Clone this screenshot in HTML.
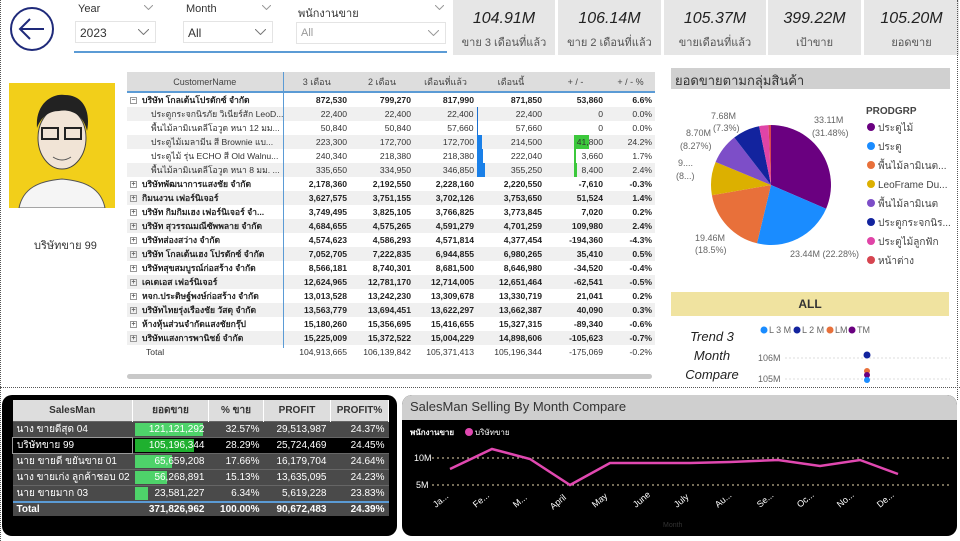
<!DOCTYPE html>
<html><head><meta charset="utf-8"><style>
*{box-sizing:border-box;margin:0;padding:0}
body{width:960px;height:541px;background:#fff;position:relative;overflow:hidden;font-family:"Liberation Sans","DejaVu Sans",sans-serif;color:#333}
.a{position:absolute}
.lbl{font-size:11px;color:#333}
.box{border:1px solid #e4e4e4;background:#fff;font-size:12px;color:#333;padding:4px 4px}
.chev{position:absolute;right:6px;top:7px;width:11px;height:6px}
.card{position:absolute;top:0;height:55px;background:#e6e6e6;text-align:center}
.card .v{font-size:16px;font-style:italic;color:#222;margin-top:10px}
.card .l{font-size:11px;color:#555;margin-top:5px}
table.m{position:absolute;left:127px;top:72px;width:528px;border-collapse:collapse;font-size:8.6px;table-layout:fixed}
table.m td{height:13.4px;padding:0 3px;text-align:right;white-space:nowrap;overflow:hidden;color:#333}
table.m td:first-child{text-align:left}
table.m th{height:20px;background:#ddd;font-weight:normal;font-size:9px;color:#444;border-bottom:2px solid #5b9bd5}
table.m tr.b td{font-weight:bold;color:#222}
table.m tr:nth-child(odd) td{background:#f0f0f0}
.pm{display:inline-block;width:7px;height:7px;border:1px solid #999;font-size:7px;line-height:5px;text-align:center;margin-right:5px;color:#666;vertical-align:middle}
table.s{position:absolute;left:12px;top:400px;width:376px;border-collapse:collapse;font-size:10px;table-layout:fixed}
table.s th{background:#ddd;color:#333;height:21px;font-size:10px;border-right:1px solid #fff}
table.s td{height:14.6px;color:#fff;background:#4a4a4a;text-align:right;padding:0 4px;border-top:1px solid #666;white-space:nowrap;position:relative}
table.s td:first-child{text-align:left}
.bar{position:absolute;left:2px;top:1px;bottom:1px;background:#4ed36a}
.bar+span{position:relative}
</style></head><body>
<svg class="a" style="left:9px;top:6px" width="46" height="46" viewBox="0 0 46 46"><circle cx="23" cy="23" r="21" fill="none" stroke="#1f2a7a" stroke-width="2"/><path d="M35 23H12M21 13L11 23L21 33" fill="none" stroke="#1f2a7a" stroke-width="2"/></svg>
<div class="a lbl" style="left:78px;top:3px">Year</div><svg class="a" style="left:144px;top:5px" width="9" height="5"><polyline points="0,0 4.5,4.5 9,0" fill="none" stroke="#999"/></svg>
<div class="a box" style="left:75px;top:21px;width:81px;height:22px">2023<svg class="chev"><polyline points="0,0 5.5,5.5 11,0" fill="none" stroke="#777"/></svg></div>
<div class="a lbl" style="left:186px;top:3px">Month</div><svg class="a" style="left:262px;top:5px" width="9" height="5"><polyline points="0,0 4.5,4.5 9,0" fill="none" stroke="#999"/></svg>
<div class="a box" style="left:183px;top:21px;width:90px;height:22px">All<svg class="chev"><polyline points="0,0 5.5,5.5 11,0" fill="none" stroke="#777"/></svg></div>
<div class="a lbl" style="left:298px;top:4px">พนักงานขาย</div><svg class="a" style="left:435px;top:5px" width="9" height="5"><polyline points="0,0 4.5,4.5 9,0" fill="none" stroke="#999"/></svg>
<div class="a box" style="left:296px;top:22px;width:150px;height:22px;color:#999;font-size:11px">All<svg class="chev"><polyline points="0,0 5.5,5.5 11,0" fill="none" stroke="#999"/></svg></div>
<div class="a" style="left:74px;top:51px;width:373px;height:2px;background:#5b9bd5"></div>
<div class="card" style="left:453px;width:102px"><div class="v">104.91M</div><div class="l">ขาย 3 เดือนที่แล้ว</div></div>
<div class="card" style="left:558px;width:103px"><div class="v">106.14M</div><div class="l">ขาย 2 เดือนที่แล้ว</div></div>
<div class="card" style="left:664px;width:102px"><div class="v">105.37M</div><div class="l">ขายเดือนที่แล้ว</div></div>
<div class="card" style="left:768px;width:93px"><div class="v">399.22M</div><div class="l">เป้าขาย</div></div>
<div class="card" style="left:864px;width:95px"><div class="v">105.20M</div><div class="l">ยอดขาย</div></div>
<div class="a" style="left:0;top:0;width:2px;height:541px;border-left:1px dotted #555"></div>
<div class="a" style="left:957px;top:0;width:2px;height:400px;border-left:1px dotted #555"></div>
<div class="a" style="left:0;top:387px;width:960px;border-top:1px dotted #555"></div>
<div class="a" style="left:9px;top:83px;width:106px;height:125px;background:#f2cf1a"></div>
<svg class="a" style="left:9px;top:83px" width="106" height="125" viewBox="0 0 106 125"><path d="M10 125C14 105 30 98 53 96C76 98 92 105 96 125Z" fill="#f5f5f5" stroke="#555"/><ellipse cx="53" cy="55" rx="24" ry="31" fill="#f1e4d6" stroke="#444"/><path d="M28 45C26 20 44 10 56 12C74 12 82 28 78 48C74 30 60 26 50 28C40 28 32 34 28 45Z" fill="#222"/><rect x="33" y="45" width="16" height="11" fill="none" stroke="#222" stroke-width="2"/><rect x="56" y="45" width="16" height="11" fill="none" stroke="#222" stroke-width="2"/><path d="M44 74Q53 80 62 74" stroke="#555" fill="none"/></svg>
<div class="a" style="left:34px;top:236px;font-size:11px;color:#333">บริษัทขาย 99</div>
<table class="m"><colgroup><col style="width:156px"><col style="width:67px"><col style="width:64px"><col style="width:63px"><col style="width:68px"><col style="width:61px"><col style="width:49px"></colgroup>
<tr><th>CustomerName</th><th style="border-left:1px solid #5b9bd5">3 เดือน</th><th>2 เดือน</th><th>เดือนที่แล้ว</th><th>เดือนนี้</th><th>+ / -</th><th>+ / - %</th></tr>
<tr class="b"><td><span class="pm">−</span>บริษัท โกลเด้นโปรดักซ์ จำกัด</td><td>872,530</td><td>799,270</td><td>817,990</td><td>871,850</td><td>53,860</td><td>6.6%</td></tr>
<tr><td style="padding-left:24px">ประตูกระจกนิรภัย วิเนียร์สัก LeoD...</td><td>22,400</td><td>22,400</td><td>22,400</td><td style="border-left:1px solid #1a6fd0">22,400</td><td>0</td><td>0.0%</td></tr>
<tr><td style="padding-left:24px">พื้นไม้ลามิเนตลีโอวูด หนา 12 มม...</td><td>50,840</td><td>50,840</td><td>57,660</td><td style="border-left:1px solid #1a6fd0">57,660</td><td>0</td><td>0.0%</td></tr>
<tr><td style="padding-left:24px">ประตูไม้เมลามีน สี Brownie แบ...</td><td>223,300</td><td>172,700</td><td>172,700</td><td style="background:linear-gradient(90deg,#1a80e8 5px,#f0f0f0 5px)">214,500</td><td style="background:linear-gradient(90deg,#f0f0f0 29px,#3cc83c 29px,#3cc83c 44px,#f0f0f0 44px)">41,800</td><td>24.2%</td></tr>
<tr><td style="padding-left:24px">ประตูไม้ รุ่น ECHO สี Old Walnu...</td><td>240,340</td><td>218,380</td><td>218,380</td><td style="background:linear-gradient(90deg,#1a80e8 6px,#fff 6px)">222,040</td><td style="background:linear-gradient(90deg,#fff 29px,#3cc83c 29px,#3cc83c 31px,#fff 31px)">3,660</td><td>1.7%</td></tr>
<tr><td style="padding-left:24px">พื้นไม้ลามิเนตลีโอวูด หนา 8 มม. ...</td><td>335,650</td><td>334,950</td><td>346,850</td><td style="background:linear-gradient(90deg,#1a80e8 8px,#f0f0f0 8px)">355,250</td><td style="background:linear-gradient(90deg,#f0f0f0 29px,#3cc83c 29px,#3cc83c 32px,#f0f0f0 32px)">8,400</td><td>2.4%</td></tr>
<tr class="b"><td><span class="pm">+</span>บริษัทพัฒนาการแสงชัย จำกัด</td><td>2,178,360</td><td>2,192,550</td><td>2,228,160</td><td>2,220,550</td><td>-7,610</td><td>-0.3%</td></tr>
<tr class="b"><td><span class="pm">+</span>กิมนงวน เฟอร์นิเจอร์</td><td>3,627,575</td><td>3,751,155</td><td>3,702,126</td><td>3,753,650</td><td>51,524</td><td>1.4%</td></tr>
<tr class="b"><td><span class="pm">+</span>บริษัท กิมกิมเฮง เฟอร์นิเจอร์ จำ...</td><td>3,749,495</td><td>3,825,105</td><td>3,766,825</td><td>3,773,845</td><td>7,020</td><td>0.2%</td></tr>
<tr class="b"><td><span class="pm">+</span>บริษัท สุวรรณมณีซัพพลาย จำกัด</td><td>4,684,655</td><td>4,575,265</td><td>4,591,279</td><td>4,701,259</td><td>109,980</td><td>2.4%</td></tr>
<tr class="b"><td><span class="pm">+</span>บริษัทส่องสว่าง จำกัด</td><td>4,574,623</td><td>4,586,293</td><td>4,571,814</td><td>4,377,454</td><td>-194,360</td><td>-4.3%</td></tr>
<tr class="b"><td><span class="pm">+</span>บริษัท โกลเด้นเฮง โปรดักซ์ จำกัด</td><td>7,052,705</td><td>7,222,835</td><td>6,944,855</td><td>6,980,265</td><td>35,410</td><td>0.5%</td></tr>
<tr class="b"><td><span class="pm">+</span>บริษัทสุขสมบูรณ์ก่อสร้าง จำกัด</td><td>8,566,181</td><td>8,740,301</td><td>8,681,500</td><td>8,646,980</td><td>-34,520</td><td>-0.4%</td></tr>
<tr class="b"><td><span class="pm">+</span>เคเดเอส เฟอร์นิเจอร์</td><td>12,624,965</td><td>12,781,170</td><td>12,714,005</td><td>12,651,464</td><td>-62,541</td><td>-0.5%</td></tr>
<tr class="b"><td><span class="pm">+</span>หจก.ประดิษฐ์พงษ์ก่อสร้าง จำกัด</td><td>13,013,528</td><td>13,242,230</td><td>13,309,678</td><td>13,330,719</td><td>21,041</td><td>0.2%</td></tr>
<tr class="b"><td><span class="pm">+</span>บริษัทไทยรุ่งเรืองชัย วัสดุ จำกัด</td><td>13,563,779</td><td>13,694,451</td><td>13,622,297</td><td>13,662,387</td><td>40,090</td><td>0.3%</td></tr>
<tr class="b"><td><span class="pm">+</span>ห้างหุ้นส่วนจำกัดแสงชัยกรุ๊ป</td><td>15,180,260</td><td>15,356,695</td><td>15,416,655</td><td>15,327,315</td><td>-89,340</td><td>-0.6%</td></tr>
<tr class="b"><td><span class="pm">+</span>บริษัทแสงการพานิชย์ จำกัด</td><td>15,225,009</td><td>15,372,522</td><td>15,004,229</td><td>14,898,606</td><td>-105,623</td><td>-0.7%</td></tr>
<tr><td style="padding-left:19px;background:#fff">Total</td><td style="background:#fff">104,913,665</td><td style="background:#fff">106,139,842</td><td style="background:#fff">105,371,413</td><td style="background:#fff">105,196,344</td><td style="background:#fff">-175,069</td><td style="background:#fff">-0.2%</td></tr>
</table>
<div class="a" style="left:283px;top:92px;width:1px;height:256px;background:#5b9bd5"></div>
<div class="a" style="left:127px;top:374px;width:525px;height:5px;border-radius:3px;background:#c8c8c8"></div>
<div class="a" style="left:671px;top:68px;width:279px;height:21px;background:#d0d0d0;font-size:13px;color:#333;padding:2px 4px">ยอดขายตามกลุ่มสินค้า</div>
<svg class="a" style="left:660px;top:90px" width="300" height="200" viewBox="660 90 300 200">
<path d="M771 185L771 125A60 60 0 0 1 826.1 208.7Z" fill="#6a0080"/>
<path d="M771 185L826.1 208.7A60 60 0 0 1 757 243.3Z" fill="#1a8cff"/>
<path d="M771 185L757 243.3A60 60 0 0 1 711.9 195.3Z" fill="#e8703a"/>
<path d="M771 185L711.9 195.3A60 60 0 0 1 715.6 162Z" fill="#dcb000"/>
<path d="M771 185L715.6 162A60 60 0 0 1 734.3 137.5Z" fill="#7d4ec8"/>
<path d="M771 185L734.3 137.5A60 60 0 0 1 759.1 126.2Z" fill="#12239e"/>
<path d="M771 185L759.1 126.2A60 60 0 0 1 768.5 125.1Z" fill="#e044a7"/>
<path d="M771 185L768.5 125.1A60 60 0 0 1 771 125Z" fill="#d64550"/>
<g fill="#666" font-size="9">
<text x="814" y="123">33.11M</text><text x="812" y="136">(31.48%)</text>
<text x="790" y="257">23.44M (22.28%)</text>
<text x="695" y="241">19.46M</text><text x="695" y="253">(18.5%)</text>
<text x="678" y="166">9....</text><text x="676" y="179">(8...)</text>
<text x="686" y="136">8.70M</text><text x="680" y="149">(8.27%)</text>
<text x="711" y="119">7.68M</text><text x="713" y="131">(7.3%)</text>
</g>
<g font-size="10" fill="#444"><text x="866" y="114" font-weight="bold" font-size="10">PRODGRP</text>
<circle cx="871" cy="127" r="4" fill="#6a0080"/><text x="878" y="131">ประตูไม้</text>
<circle cx="871" cy="146" r="4" fill="#1a8cff"/><text x="878" y="150">ประตู</text>
<circle cx="871" cy="165" r="4" fill="#e8703a"/><text x="878" y="169">พื้นไม้ลามิเนต...</text>
<circle cx="871" cy="184" r="4" fill="#dcb000"/><text x="878" y="188">LeoFrame Du...</text>
<circle cx="871" cy="203" r="4" fill="#7d4ec8"/><text x="878" y="207">พื้นไม้ลามิเนต</text>
<circle cx="871" cy="222" r="4" fill="#12239e"/><text x="878" y="226">ประตูกระจกนิร...</text>
<circle cx="871" cy="241" r="4" fill="#e044a7"/><text x="878" y="245">ประตูไม้ลูกฟัก</text>
<circle cx="871" cy="260" r="4" fill="#d64550"/><text x="878" y="264">หน้าต่าง</text></g>
</svg>
<div class="a" style="left:671px;top:292px;width:278px;height:24px;background:#f0e3a0;text-align:center;font-size:12px;font-weight:bold;color:#333;line-height:24px">ALL</div>
<div class="a" style="left:680px;top:327px;width:64px;text-align:center;font-size:13px;font-style:italic;color:#222;line-height:19px">Trend 3<br>Month<br>Compare</div>
<svg class="a" style="left:750px;top:320px" width="205" height="68"><g font-size="9" fill="#666"><circle cx="14" cy="10" r="3.5" fill="#1a8cff"/><text x="19" y="13">L 3 M</text><circle cx="47" cy="10" r="3.5" fill="#12239e"/><text x="52" y="13">L 2 M</text><circle cx="80" cy="10" r="3.5" fill="#e8703a"/><text x="85" y="13">LM</text><circle cx="102" cy="10" r="3.5" fill="#6a0080"/><text x="107" y="13">TM</text>
<text x="8" y="41">106M</text><text x="8" y="62">105M</text></g>
<path d="M35 38H200M35 59H200" stroke="#ddd" stroke-dasharray="2 2"/>
<circle cx="117" cy="35" r="3.5" fill="#12239e"/><circle cx="117" cy="51" r="3" fill="#e8703a"/><circle cx="117" cy="55" r="3" fill="#6a0080"/><circle cx="117" cy="60" r="3" fill="#1a8cff"/></svg>
<div class="a" style="left:2px;top:395px;width:395px;height:141px;background:#000;border-radius:10px"></div>
<table class="s"><colgroup><col style="width:120px"><col style="width:76px"><col style="width:55px"><col style="width:67px"><col style="width:58px"></colgroup>
<tr><th>SalesMan</th><th>ยอดขาย</th><th>% ขาย</th><th>PROFIT</th><th>PROFIT%</th></tr>
<tr><td>นาง ขายดีสุด 04</td><td><div class="bar" style="width:68px"></div><span>121,121,292</span></td><td>32.57%</td><td>29,513,987</td><td>24.37%</td></tr>
<tr><td style="background:#000;border:1px solid #999">บริษัทขาย 99</td><td style="background:#000"><div class="bar" style="width:59px;background:#1fb02f"></div><span>105,196,344</span></td><td style="background:#000">28.29%</td><td style="background:#000">25,724,469</td><td style="background:#000">24.45%</td></tr>
<tr><td>นาย ขายดี ขยันขาย 01</td><td><div class="bar" style="width:37px"></div><span>65,659,208</span></td><td>17.66%</td><td>16,179,704</td><td>24.64%</td></tr>
<tr><td>นาง ขายเก่ง ลูกค้าชอบ 02</td><td><div class="bar" style="width:32px"></div><span>56,268,891</span></td><td>15.13%</td><td>13,635,095</td><td>24.23%</td></tr>
<tr><td>นาย ขายมาก 03</td><td><div class="bar" style="width:13px"></div><span>23,581,227</span></td><td>6.34%</td><td>5,619,228</td><td>23.83%</td></tr>
<tr><td style="font-weight:bold;border-top:2px solid #5b9bd5">Total</td><td style="font-weight:bold;border-top:2px solid #5b9bd5">371,826,962</td><td style="font-weight:bold;border-top:2px solid #5b9bd5">100.00%</td><td style="font-weight:bold;border-top:2px solid #5b9bd5">90,672,483</td><td style="font-weight:bold;border-top:2px solid #5b9bd5">24.39%</td></tr>
</table>
<div class="a" style="left:402px;top:395px;width:555px;height:141px;background:#000;border-radius:10px;overflow:hidden">
<div style="height:25px;background:#cfcfcf;font-size:13px;color:#333;padding:4px 8px">SalesMan Selling By Month Compare</div></div>
<svg class="a" style="left:402px;top:420px" width="555" height="116" viewBox="402 420 555 116">
<text x="410" y="435" fill="#fff" font-size="8" font-weight="bold">พนักงานขาย</text><circle cx="469" cy="432" r="4" fill="#e048b0"/><text x="475" y="435" fill="#fff" font-size="8">บริษัทขาย</text>
<text x="414" y="461" fill="#fff" font-size="9">10M</text><text x="416" y="488" fill="#fff" font-size="9">5M</text>
<path d="M432 458H952M432 485H952" stroke="#e8d8b0" stroke-dasharray="2 3"/>
<polyline points="450,469 492,449 530,459 570,485 610,463 650,463 690,463 730,462 778,460 820,466 860,460 898,474" fill="none" stroke="#e048b0" stroke-width="2.5"/>
<g fill="#fff" font-size="9">
<text transform="translate(436,508) rotate(-40)">Ja...</text><text transform="translate(476,508) rotate(-40)">Fe...</text><text transform="translate(516,508) rotate(-40)">M...</text><text transform="translate(553,510) rotate(-40)">April</text><text transform="translate(595,508) rotate(-40)">May</text><text transform="translate(636,508) rotate(-40)">June</text><text transform="translate(677,508) rotate(-40)">July</text><text transform="translate(718,508) rotate(-40)">Au...</text><text transform="translate(760,508) rotate(-40)">Se...</text><text transform="translate(800,508) rotate(-40)">Oc...</text><text transform="translate(840,508) rotate(-40)">No...</text><text transform="translate(880,508) rotate(-40)">De...</text></g>
<text x="663" y="527" fill="#333" font-size="7">Month</text>
</svg>
</body></html>
